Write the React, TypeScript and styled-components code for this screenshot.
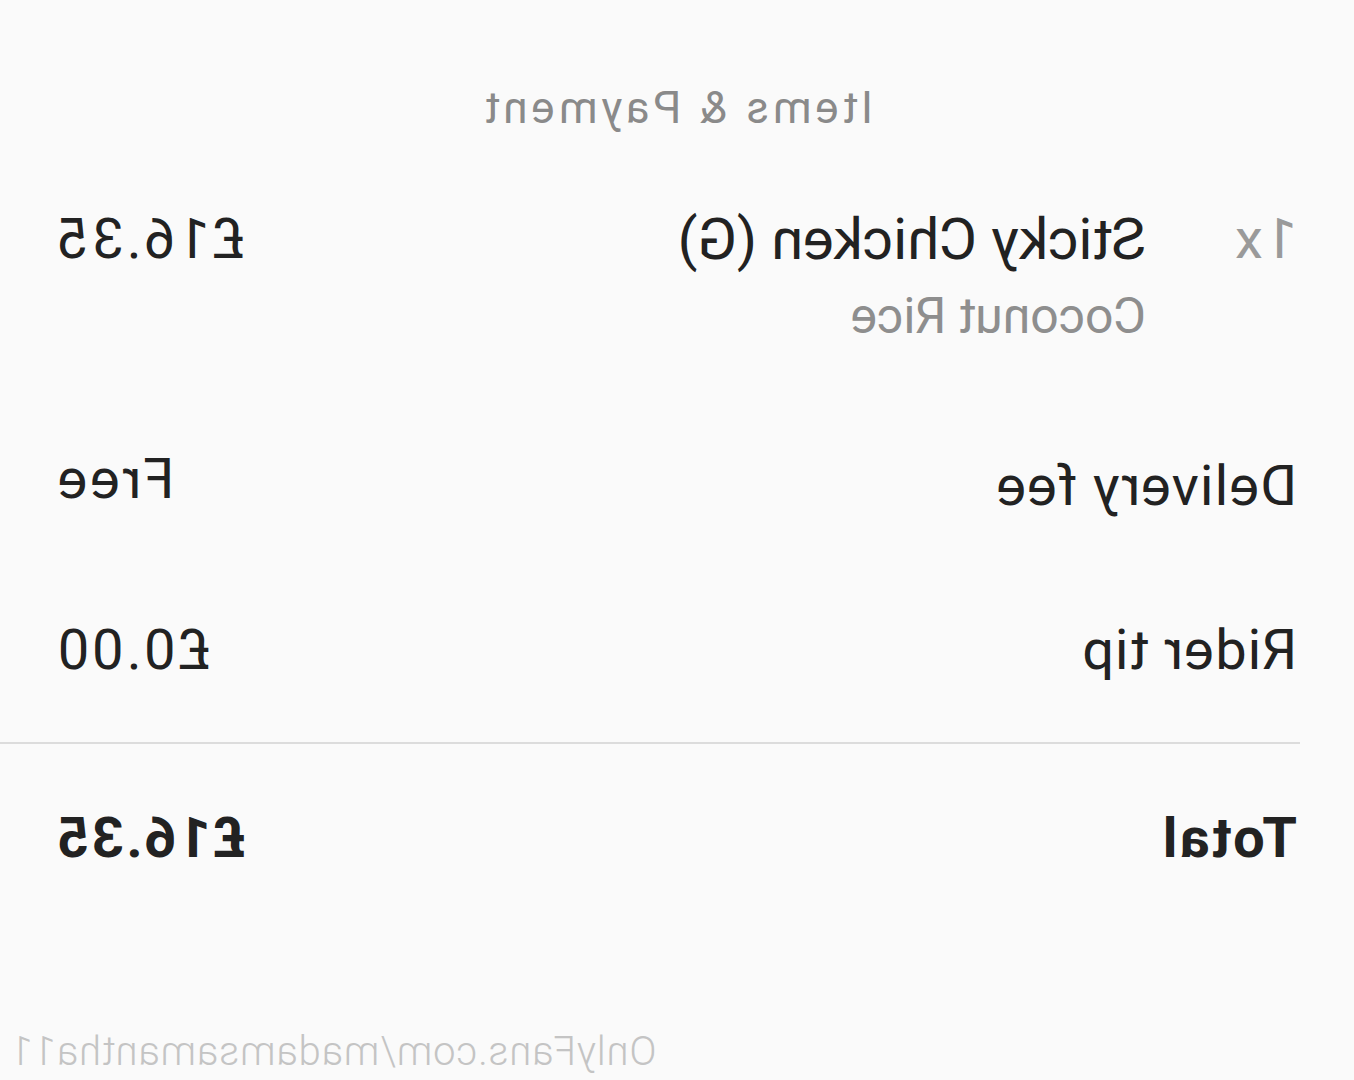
import React from "react";
import styled, { createGlobalStyle } from "styled-components";

const Global = createGlobalStyle`
  html, body { margin: 0; padding: 0; background: #fafafa; }
  body { font-family: Roboto, "Liberation Sans", sans-serif; }
`;

const Mirror = styled.div`
  width: 1354px;
  height: 1080px;
  transform: scaleX(-1);
  background: #fafafa;
  display: flex;
  flex-direction: column;
  overflow: hidden;
  position: relative;
`;

const Title = styled.h2`
  margin: 0;
  padding-top: 84px;
  text-align: center;
  font-size: 44px;
  font-weight: 400;
  letter-spacing: 0.09em;
  color: #8a8a8a;
  line-height: 48px;
`;

const Content = styled.div`
  padding: 0 55px 0 57px;
  display: flex;
  flex-direction: column;
`;

const ItemRow = styled.div`
  display: grid;
  grid-template-columns: 151px 1fr auto;
  margin-top: 75px;
  align-items: start;
`;

const Qty = styled.span`
  font-size: 56px;
  color: #9a9a9a;
  letter-spacing: 0.05em;
  line-height: 64px;
`;

const ItemInfo = styled.div`
  display: flex;
  flex-direction: column;
`;

const ItemName = styled.span`
  font-size: 58px;
  color: #222;
  letter-spacing: 0;
  line-height: 64px;
`;

const ItemSub = styled.span`
  margin-top: 17px;
  font-size: 50px;
  color: #8e8e8e;
  letter-spacing: 0;
  line-height: 56px;
`;

const Row = styled.div<{ $top: number }>`
  display: flex;
  justify-content: space-between;
  align-items: center;
  margin-top: ${(p) => p.$top}px;
`;

const Label = styled.span<{ $bold?: boolean }>`
  font-size: 56px;
  color: #222;
  font-weight: ${(p) => (p.$bold ? 700 : 400)};
  letter-spacing: ${(p) => (p.$bold ? "0.04em" : "0.02em")};
  line-height: 64px;
`;

const Value = styled.span<{ $bold?: boolean; $shift?: number }>`
  font-size: 56px;
  color: #222;
  font-weight: ${(p) => (p.$bold ? 700 : 400)};
  letter-spacing: ${(p) => (p.$bold ? "0.04em" : "0.05em")};
  line-height: 64px;
  transform: translateY(${(p) => p.$shift ?? 0}px);
`;

const Divider = styled.hr`
  border: 0;
  height: 2px;
  background: #dcdcdc;
  margin: 60px -55px 0 -3px;
`;

const Watermark = styled.div`
  position: absolute;
  right: 10px;
  bottom: 5px;
  font-size: 40px;
  font-weight: 300;
  color: #c4c4c4;
  letter-spacing: 0.02em;
`;

export default function App() {
  return (
    <>
      <Global />
      <Mirror>
        <Title>Items &amp; Payment</Title>
        <Content>
          <ItemRow>
            <Qty>1x</Qty>
            <ItemInfo>
              <ItemName>Sticky Chicken (G)</ItemName>
              <ItemSub>Coconut Rice</ItemSub>
            </ItemInfo>
            <Value>£16.35</Value>
          </ItemRow>
          <Row $top={110}>
            <Label>Delivery fee</Label>
            <Value $shift={-7}>Free</Value>
          </Row>
          <Row $top={100}>
            <Label>Rider tip</Label>
            <Value>£0.00</Value>
          </Row>
          <Divider />
          <Row $top={62}>
            <Label $bold>Total</Label>
            <Value $bold>£16.35</Value>
          </Row>
        </Content>
        <Watermark>OnlyFans.com/madamsamantha11</Watermark>
      </Mirror>
    </>
  );
}
